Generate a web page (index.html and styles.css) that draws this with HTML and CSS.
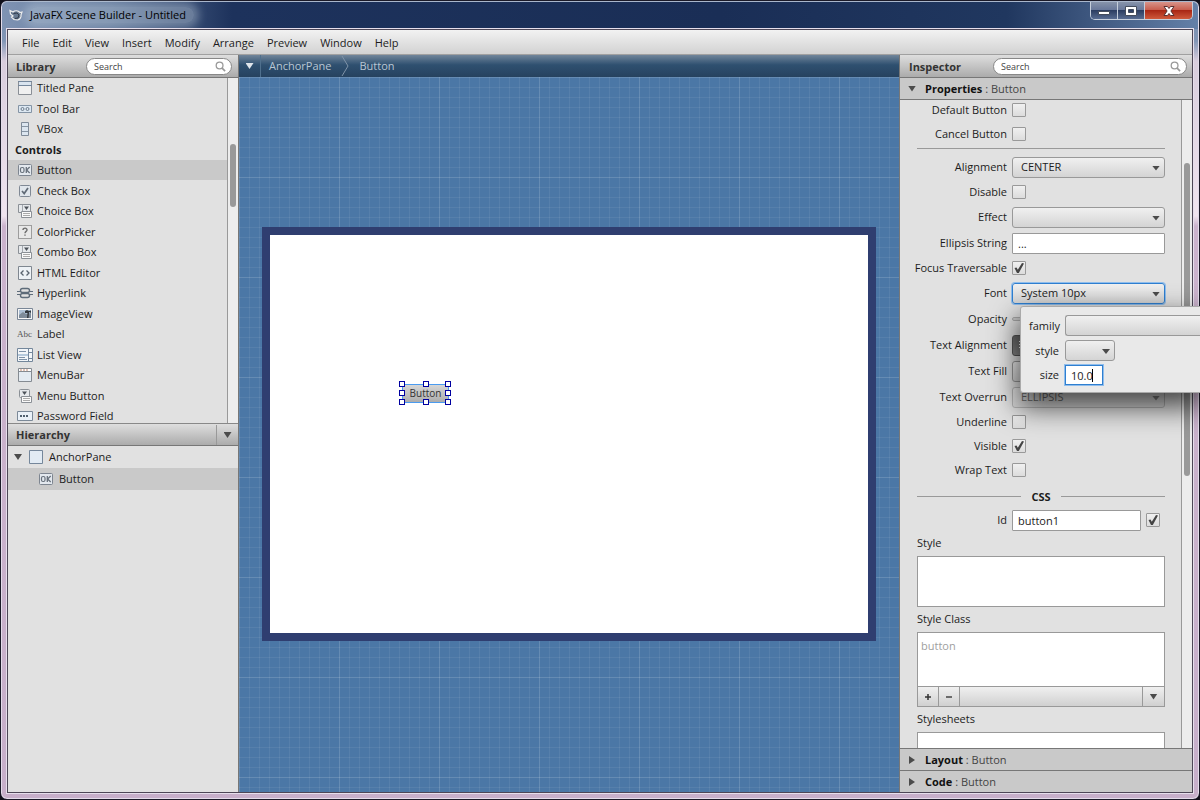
FILE: index.html
```html
<!DOCTYPE html>
<html lang="en">
<head>
  <meta charset="UTF-8" />
  <meta name="viewport" content="width=device-width, initial-scale=1.0"/>
  <title>JavaFX Scene Builder - Untitled</title>
  <link rel="stylesheet" href="styles.css">
</head>
<body>

<svg class="symbols" aria-hidden="true">
  <symbol id="i-titled" viewBox="0 0 16 16"><path d="M1.5 1.5h13v13h-13z" fill="#f0f0f0" stroke="#8a8f96"/><path d="M2 2h12v3H2z" fill="#d9e4ef"/><path d="M1 5.5h14M1 1.5h14" stroke="#74879c"/></symbol>
  <symbol id="i-toolbar" viewBox="0 0 16 16"><path d="M1.5 4.5h13v7h-13z" fill="#dde8f2" stroke="#8494a5"/><circle cx="5.5" cy="8" r="1.5" fill="none" stroke="#6c7a89"/><circle cx="10.5" cy="8" r="1.5" fill="none" stroke="#6c7a89"/></symbol>
  <symbol id="i-vbox" viewBox="0 0 16 16"><path d="M4.5 1.5h7v13h-7z" fill="#dce6f0" stroke="#7f8b99"/><path d="M5 5.500h6M5 10.500h6" stroke="#8795a4"/></symbol>
  <symbol id="i-button" viewBox="0 0 16 16"><rect x="1.500" y="2.500" width="13" height="11" rx="1" fill="#e3e8ee" stroke="#7d8590"/><rect x="3.500" y="5.500" width="3.500" height="5" rx="1.500" fill="none" stroke="#68717c" stroke-width="1.200"/><path d="M9.300 5v6M12.700 5L9.600 8l3.100 3" fill="none" stroke="#68717c" stroke-width="1.300"/></symbol>
  <symbol id="i-check" viewBox="0 0 16 16"><rect x="2.500" y="2.500" width="11" height="11" rx="1" fill="#e0e6ec" stroke="#808995"/><path d="M5 8l2.200 2.500L11 5" fill="none" stroke="#606a76" stroke-width="1.700"/></symbol>
  <symbol id="i-choice" viewBox="0 0 16 16"><path d="M1.500 1.500h12v8h-12z" fill="#e6e9ec" stroke="#8b9096"/><path d="M5.500 2v7" stroke="#a3a8ae"/><path d="M7 3.500h5L9.500 7z" fill="#4c5259"/><path d="M4.500 8.500h10v6h-10z" fill="#fafafa" stroke="#8b9096"/><path d="M6 10.500h7M6 12.500h7" stroke="#aaa"/></symbol>
  <symbol id="i-picker" viewBox="0 0 16 16"><path d="M1.500 1.500h13v13h-13z" fill="#e8e8e8" stroke="#555" stroke-dasharray="1 1"/><path d="M6 6c0-2.600 4.200-2.300 4 0-.1 1.400-2 1.400-2 3.200M8 10.500v1.300" fill="none" stroke="#6d6d6d" stroke-width="1.400"/></symbol>
  <symbol id="i-html" viewBox="0 0 16 16"><path d="M1.500 1.500h13v13h-13z" fill="#eef2f6" stroke="#7f8790"/><path d="M6.500 5.500L4 8l2.500 2.500M9.500 5.500L12 8l-2.500 2.500" fill="none" stroke="#59636e" stroke-width="1.300"/></symbol>
  <symbol id="i-link" viewBox="0 0 16 16"><rect x="3.500" y="3.500" width="9" height="4" rx="2" fill="none" stroke="#5d6b79" stroke-width="1.400"/><rect x="3.500" y="8.500" width="9" height="4" rx="2" fill="none" stroke="#5d6b79" stroke-width="1.400"/><path d="M0 6.500h4M12 6.500h4M0 9.500h4M12 9.500h4M5 8h6" stroke="#5d6b79" stroke-width="1.200"/></symbol>
  <symbol id="i-image" viewBox="0 0 16 16"><path d="M.5 2.500h15v11H.5z" fill="#f6f6f6" stroke="#7a8797"/><path d="M2 4h12v6H2z" fill="#adc0d5"/><path d="M2 9l4-3 3 2 5-1v5H2z" fill="#7e8b99"/><path d="M8 5l2-1 2 1 2-.5V7l-2-1v1l-.5 5H10l.5-5L8 7z" fill="#33383e"/></symbol>
  <symbol id="i-list" viewBox="0 0 16 16"><path d="M.5 1.500h15v13H.5z" fill="#f3f6f9" stroke="#74879b"/><path d="M11.500 2v12M12 5.500h3M12 11.500h3" stroke="#74879b"/><path d="M2 4.500h7M2 7.500h8M2 10.500h6M2 12.500h8" stroke="#7f93a8"/><path d="M1 7h10v2H1z" fill="#b6cadd"/></symbol>
  <symbol id="i-menubar" viewBox="0 0 16 16"><path d="M1.500 1.500h13v13h-13z" fill="#e4ebf2" stroke="#858b92"/><path d="M2 2h12v2.500H2z" fill="#fff"/><path d="M2 4.500h12" stroke="#858b92"/><path d="M3 3h2M6 3h2M9 3h2" stroke="#c08a72"/></symbol>
  <symbol id="i-menubtn" viewBox="0 0 16 16"><rect x="2.500" y="1.500" width="10" height="8" rx="1" fill="#e6e9ec" stroke="#8b9096"/><path d="M5 3.500h5L7.500 7z" fill="#4c5259"/><path d="M4.500 8.500h10v6h-10z" fill="#fafafa" stroke="#8b9096"/><path d="M6 10.500h7M6 12.500h7" stroke="#aaa"/></symbol>
  <symbol id="i-pass" viewBox="0 0 16 16"><path d="M.5 3.500h15v9H.5z" fill="#eaf1f8" stroke="#7b8998"/><path d="M3 7h2v2H3zM6 7h2v2H6zM9 7h2v2H9z" fill="#50606f"/></symbol>
  <symbol id="i-anchor" viewBox="0 0 16 16"><path d="M1.500 1.500h13v13h-13z" fill="#e2ebf4" stroke="#75879b"/></symbol>
  <symbol id="i-search" viewBox="0 0 12 12"><circle cx="5" cy="5" r="3.700" fill="none" stroke="#999" stroke-width="1.400"/><path d="M7.500 7.500L11 11" stroke="#999" stroke-width="1.800"/></symbol>
</svg>

<div class="window">
  <header class="titlebar">
    <svg class="app-icon" viewBox="0 0 14 14"><path d="M1 2.500l3 1.500c2-1.800 5-1.700 7 .5l2-.5-1 3c.5 2-1 4.500-3.500 5L5 11.500 2.500 9 4 8 1.500 6z" fill="#66788f" stroke="#eee" stroke-width="1.200"/><path d="M4.500 5.500L8 5l2 2-1 3-3 .5" fill="none" stroke="#303a4a"/></svg>
    <h1>JavaFX Scene Builder - Untitled</h1>
    <div class="window-buttons">
      <button aria-label="Minimize"><svg viewBox="0 0 14 12"><path d="M1.500 6.500h11v3h-11z" fill="#fff" stroke="#444c5c"/></svg></button>
      <button aria-label="Maximize"><svg viewBox="0 0 14 12"><path d="M1.500 1.500h11v9h-11zM4.500 4.500v3h5v-3z" fill="#fff" fill-rule="evenodd" stroke="#444c5c"/></svg></button>
      <button class="close" aria-label="Close"><svg viewBox="0 0 14 12"><path d="M2 1.500h3.500L7 3.500l1.500-2H12L8.900 6l3.100 4.500H8.500L7 8.500l-1.500 2H2L5.100 6z" fill="#fff" stroke="#5a3030"/></svg></button>
    </div>
  </header>

  <div class="app">
    <nav class="menubar">
      <button>File</button>
      <button>Edit</button>
      <button>View</button>
      <button>Insert</button>
      <button>Modify</button>
      <button>Arrange</button>
      <button>Preview</button>
      <button>Window</button>
      <button>Help</button>
    </nav>

    <div class="workspace">
      <aside class="left">
        <div class="panel-head">
          <h2>Library</h2>
          <label class="search"><input type="text" placeholder="Search" aria-label="Search library"><svg><use href="#i-search"/></svg></label>
        </div>
        <div class="library">
          <ul class="items">
            <li><svg><use href="#i-titled"/></svg>Titled Pane</li>
            <li><svg><use href="#i-toolbar"/></svg>Tool Bar</li>
            <li><svg><use href="#i-vbox"/></svg>VBox</li>
            <li class="group">Controls</li>
            <li class="selected"><svg><use href="#i-button"/></svg>Button</li>
            <li><svg><use href="#i-check"/></svg>Check Box</li>
            <li><svg><use href="#i-choice"/></svg>Choice Box</li>
            <li><svg><use href="#i-picker"/></svg>ColorPicker</li>
            <li><svg><use href="#i-choice"/></svg>Combo Box</li>
            <li><svg><use href="#i-html"/></svg>HTML Editor</li>
            <li><svg><use href="#i-link"/></svg>Hyperlink</li>
            <li><svg><use href="#i-image"/></svg>ImageView</li>
            <li><span class="abc">Abc</span>Label</li>
            <li><svg><use href="#i-list"/></svg>List View</li>
            <li><svg><use href="#i-menubar"/></svg>MenuBar</li>
            <li><svg><use href="#i-menubtn"/></svg>Menu Button</li>
            <li><svg><use href="#i-pass"/></svg>Password Field</li>
          </ul>
          <div class="track"><div class="thumb"></div></div>
        </div>
        <div class="panel-head hierarchy-head">
          <h2>Hierarchy</h2>
          <button class="head-menu" aria-label="Hierarchy options"><i class="arrow"></i></button>
        </div>
        <ul class="tree">
          <li><i class="arrow"></i><svg><use href="#i-anchor"/></svg>AnchorPane</li>
          <li class="child selected"><svg><use href="#i-button"/></svg>Button</li>
        </ul>
      </aside>

      <main class="content">
        <nav class="crumbs">
          <button class="crumb-menu" aria-label="Document menu"><i class="arrow"></i></button>
          <button>AnchorPane</button>
          <svg viewBox="0 0 8 20"><path d="M1 0l6 10-6 10" fill="none" stroke="#7f93a8"/></svg>
          <button>Button</button>
        </nav>
        <div class="canvas">
          <div class="artboard">
            <div class="selection">
              <button>Button</button>
              <i class="n w"></i><i class="n"></i><i class="n e"></i>
              <i class="w"></i><i class="e"></i>
              <i class="s w"></i><i class="s"></i><i class="s e"></i>
            </div>
          </div>
        </div>
      </main>

      <aside class="right">
        <div class="panel-head">
          <h2>Inspector</h2>
          <label class="search"><input type="text" placeholder="Search" aria-label="Search properties"><svg><use href="#i-search"/></svg></label>
        </div>
        <button class="section open"><i class="arrow"></i><b>Properties</b> : Button</button>
        <div class="inspector">
          <form class="props">
            <div class="row check"><label for="default">Default Button</label><input type="checkbox" id="default"></div>
            <div class="row check"><label for="cancel">Cancel Button</label><input type="checkbox" id="cancel"></div>
            <hr>
            <div class="row"><label for="alignment">Alignment</label><span class="combo"><select id="alignment"><option>CENTER</option></select></span></div>
            <div class="row check"><label for="disable">Disable</label><input type="checkbox" id="disable"></div>
            <div class="row"><label for="effect">Effect</label><span class="combo"><select id="effect"><option></option></select></span></div>
            <div class="row"><label for="ellipsis">Ellipsis String</label><input type="text" id="ellipsis" value="..."></div>
            <div class="row check"><label for="focus">Focus Traversable</label><input type="checkbox" id="focus" checked></div>
            <div class="row"><label for="font">Font</label><span class="combo focused"><select id="font"><option>System 10px</option></select></span></div>
            <div class="row"><label for="opacity">Opacity</label><input type="range" id="opacity" value="100"></div>
            <div class="row"><label for="align">Text Alignment</label><button type="button" id="align" class="toggle"><svg viewBox="0 0 10 10"><path d="M0 1.500h9M0 4.500h6M0 7.500h9" stroke="#fff"/></svg></button></div>
            <div class="row"><label for="fill">Text Fill</label><span class="combo"><select id="fill"><option></option></select></span></div>
            <div class="row"><label for="overrun">Text Overrun</label><span class="combo dim"><select id="overrun"><option>ELLIPSIS</option></select></span></div>
            <div class="row check"><label for="underline">Underline</label><input type="checkbox" id="underline"></div>
            <div class="row check"><label for="visible">Visible</label><input type="checkbox" id="visible" checked></div>
            <div class="row check"><label for="wrap">Wrap Text</label><input type="checkbox" id="wrap"></div>
            <h3>CSS</h3>
            <div class="row"><label for="id">Id</label><input type="text" id="id" value="button1"><input type="checkbox" aria-label="Use id" checked></div>
            <label class="block" for="style">Style</label>
            <textarea id="style"></textarea>
            <label class="block" for="style-class">Style Class</label>
            <div class="list-box">
              <textarea id="style-class" placeholder="button"></textarea>
              <div class="list-tools">
                <button type="button" aria-label="Add"><svg viewBox="0 0 8 8"><path d="M1 4h6M4 1v6" stroke="#333" stroke-width="1.500"/></svg></button>
                <button type="button" aria-label="Remove"><svg viewBox="0 0 8 8"><path d="M1 4h6" stroke="#444" stroke-width="1.500"/></svg></button>
                <button type="button" class="more" aria-label="More"><i class="arrow"></i></button>
              </div>
            </div>
            <label class="block" for="sheets">Stylesheets</label>
            <textarea id="sheets"></textarea>
          </form>
          <div class="track"><div class="thumb"></div></div>
        </div>
        <button class="section"><i class="arrow"></i><b>Layout</b> : Button</button>
        <button class="section"><i class="arrow"></i><b>Code</b> : Button</button>
      </aside>
    </div>
  </div>

  <!-- font editor, opened under the Font combo -->
  <div class="popup">
    <label for="family">family</label><span class="combo wide"><select id="family"><option></option></select></span>
    <label for="fstyle">style</label><span class="combo small"><select id="fstyle"><option></option></select></span>
    <label for="size">size</label><span class="size-box"><input type="text" id="size" value="10.0"><i class="caret"></i></span>
  </div>
</div>

</body>
</html>
```

FILE: styles.css
```css
:root {
  --panel: #e1e1e1;
  --line: #777;
  --text: #1c1c1c;
  --selected: #c9c9c9;
}

* {
  box-sizing: border-box;
}

body {
  margin: 0;
  height: 100vh;
  overflow: hidden;
  background-color: #10101a;
  color: var(--text);
  font-family: "Open Sans", sans-serif;
  font-size: 11px;
  line-height: 16px;
}

button, input, select, textarea {
  font: inherit;
  color: inherit;
}

button {
  padding: 0;
  border: 0;
  background: none;
}

h1, h2, h3, ul {
  margin: 0;
  padding: 0;
  font-size: 11px;
}

ul {
  list-style: none;
}

.symbols {
  position: absolute;
  width: 0;
  height: 0;
}

.arrow {
  flex: none;
  width: 8px;
  height: 6px;
  background-color: #4b4b4b;
  clip-path: polygon(0 0, 100% 0, 50% 100%);
}

/* window frame */
.window {
  position: relative;
  display: flex;
  flex-direction: column;
  height: 100vh;
  padding: 0 6px 6px;
  border: 1px solid #1b1a28;
  border-radius: 7px;
  background: linear-gradient(to bottom, #7288ab 0, #8296b6 40px, #d8cddd 60px, #f0e4ef 215px, #cbb3cd 225px, #c7afca 100%);
  box-shadow: inset 0 0 0 1px #e3dcea;
}

.titlebar {
  display: flex;
  align-items: center;
  gap: 6px;
  height: 28px;
  flex: none;
  margin: 0 -5px;
  padding: 0 0 2px 7px;
  border-top: 1px solid #a9b6cb;
  border-radius: 6px 6px 0 0;
  background: linear-gradient(to right, #7f93b3 0, #5f7699 110px, #1d325c 230px, #1a2e56 60%, #20375f 84%, #6480a8 100%);
}

.titlebar h1 {
  padding: 0 8px 0 1px;
  font-weight: normal;
  color: #000;
  background-color: rgba(190, 205, 220, 0.4);
  border-radius: 8px;
  box-shadow: 0 0 8px 5px rgba(190, 205, 220, 0.4);
}

.app-icon {
  width: 14px;
  height: 14px;
}

.window-buttons {
  display: flex;
  align-self: flex-start;
  margin-left: auto;
  margin-right: 5px;
  border: 1px solid #c5cedb;
  border-top: 0;
  border-radius: 0 0 5px 5px;
  overflow: hidden;
}

.window-buttons button {
  display: grid;
  place-items: center;
  width: 27px;
  height: 17px;
  border-right: 1px solid #c5cedb;
  background: linear-gradient(#8793aa 0, #69789a 45%, #2c3e62 50%, #576b90 100%);
}

.window-buttons .close {
  width: 47px;
  border-right: 0;
  background: linear-gradient(#d8948a 0, #c85f50 45%, #a92715 50%, #cf5a3c 100%);
}

.window-buttons svg {
  width: 14px;
  height: 12px;
}

.app {
  display: flex;
  flex-direction: column;
  flex: 1;
  min-height: 0;
  border: 1px solid #4d4656;
  box-shadow: 0 0 0 1px #e6dfec;
}

.menubar {
  display: flex;
  flex: none;
  gap: 13px;
  height: 25px;
  padding: 2px 0 0 14px;
  border-bottom: 1px solid #a0a0a0;
  background: linear-gradient(#f2f2f2, #d2d2d2);
}

.workspace {
  display: flex;
  flex: 1;
  min-height: 0;
}

.left, .right {
  display: flex;
  flex-direction: column;
  flex: none;
  background-color: var(--panel);
}

.left {
  width: 231px;
  border-right: 1px solid var(--line);
}

.right {
  width: 293px;
  border-left: 1px solid var(--line);
}

.panel-head {
  display: flex;
  align-items: center;
  justify-content: space-between;
  flex: none;
  height: 23px;
  padding: 1px 6px 0 8px;
  border-bottom: 1px solid var(--line);
  background: linear-gradient(#dedede, #ababab);
}

.panel-head h2 {
  color: #333;
}

.right .panel-head {
  padding-left: 9px;
  padding-right: 5px;
}

.search {
  display: flex;
  align-items: center;
  width: 146px;
  height: 17px;
  padding: 0 5px 0 7px;
  border: 1px solid #888;
  border-radius: 9px;
  background-color: #fff;
}

.right .search {
  width: 194px;
}

.search input {
  flex: 1;
  min-width: 0;
  padding: 0;
  border: 0;
  outline: 0;
  background: none;
  font-size: 9px;
}

.search input::placeholder {
  color: #444;
}

.search svg {
  width: 11px;
  height: 11px;
}

/* library */
.library {
  display: flex;
  flex: none;
  height: 345px;
  overflow: hidden;
}

.items {
  flex: 1;
}

.items li {
  display: flex;
  align-items: center;
  gap: 4px;
  height: 20px;
  padding-left: 9px;
}

.items li:nth-child(even) {
  height: 21px;
}

.items .group {
  padding-left: 7px;
  font-weight: bold;
}

.items svg, .tree svg {
  width: 16px;
  height: 16px;
}

.abc {
  width: 16px;
  font-family: "Liberation Serif", serif;
  font-size: 9px;
  color: #555;
}

.selected {
  background-color: var(--selected);
}

.track {
  flex: none;
  width: 11px;
  padding: 66px 2px 0;
  border-left: 1px solid #999;
  background-color: #ededed;
}

.thumb {
  height: 63px;
  border-radius: 3px;
  background-color: #999;
}

.hierarchy-head {
  padding-right: 0;
  border-top: 1px solid #888;
}

.head-menu {
  display: grid;
  place-items: center;
  width: 22px;
  height: 20px;
  border-left: 1px solid #999;
}

.tree li {
  display: flex;
  align-items: center;
  gap: 5px;
  height: 22px;
  padding-left: 6px;
}

.tree li svg {
  margin-left: 1px;
}

.tree .child {
  padding-left: 29px;
}

/* content */
.content {
  display: flex;
  flex-direction: column;
  flex: 1;
  min-width: 0;
}

.crumbs {
  display: flex;
  flex: none;
  gap: 8px;
  height: 22px;
  color: #b9c6d3;
  background: linear-gradient(#70859a, #2f5070 45%, #26425f);
}

.crumbs svg {
  width: 8px;
  height: 22px;
  margin: 0 2px;
}

.crumb-menu {
  display: grid;
  place-items: center;
  width: 22px;
  border-right: 1px solid #50708d;
}

.crumb-menu .arrow {
  background-color: #e0e6ec;
}

.canvas {
  display: grid;
  place-items: center;
  flex: 1;
  min-height: 0;
  padding-bottom: 2px;
  background-color: #4b77a6;
  background-image:
    linear-gradient(to right, rgba(255, 255, 255, 0.09) 1px, transparent 1px),
    linear-gradient(to bottom, rgba(255, 255, 255, 0.09) 1px, transparent 1px),
    linear-gradient(to right, rgba(255, 255, 255, 0.06) 1px, transparent 1px),
    linear-gradient(to bottom, rgba(255, 255, 255, 0.06) 1px, transparent 1px);
  background-size: 100px 100px, 100px 100px, 10px 10px, 10px 10px;
}

.artboard {
  position: relative;
  width: 614px;
  height: 414px;
  border: 8px solid #2f3e70;
  background-color: #fff;
}

.selection {
  position: absolute;
  left: 132px;
  top: 149px;
  width: 47px;
  height: 19px;
  border: 1px solid #4a9bf0;
}

.selection button {
  display: block;
  width: 100%;
  height: 100%;
  font-size: 10px;
  line-height: 17px;
  color: #333;
  background: linear-gradient(#d6d6d6, #adadad);
}

.selection i {
  position: absolute;
  left: calc(50% - 3px);
  top: calc(50% - 3px);
  width: 6px;
  height: 6px;
  border: 1px solid #0000a0;
  background-color: #fff;
}

.selection .n { top: -4px; }
.selection .s { top: calc(100% - 3px); }
.selection .w { left: -4px; }
.selection .e { left: calc(100% - 3px); }

/* inspector */
.section {
  display: flex;
  align-items: center;
  flex: none;
  height: 22px;
  padding-left: 8px;
  border-top: 1px solid var(--line);
  background-color: var(--selected);
  color: #444;
  white-space: pre;
}

.section b {
  color: #111;
}

.section .arrow {
  margin-right: 9px;
  transform: rotate(-90deg);
}

.section.open {
  border-top: 0;
  border-bottom: 1px solid var(--line);
}

.section.open .arrow {
  transform: none;
}

.inspector {
  display: flex;
  flex: 1;
  min-height: 0;
  overflow: hidden;
}

.props {
  display: flex;
  flex-direction: column;
  gap: 4px;
  flex: 1;
  min-width: 0;
  padding: 0 16px 0 17px;
}

.right .track {
  padding-top: 63px;
}

.right .thumb {
  height: 313px;
}

.row {
  display: flex;
  align-items: center;
  gap: 5px;
  flex: none;
  height: 22px;
}

.row.check {
  height: 20px;
}

/* long captions grow to the left, into the panel padding */
.row label {
  display: flex;
  justify-content: flex-end;
  flex: none;
  width: 90px;
  white-space: nowrap;
}

.props hr {
  flex: none;
  width: 100%;
  height: 4px;
  margin: 0;
  border: 0;
  border-top: 1px solid #999;
}

.props h3 {
  display: flex;
  align-items: center;
  gap: 10px;
  flex: none;
  height: 17px;
  margin-top: 4px;
}

.props h3::before, .props h3::after {
  content: "";
  flex: 1;
  height: 1px;
  background-color: #999;
}

input[type="checkbox"] {
  appearance: none;
  flex: none;
  width: 14px;
  height: 14px;
  margin: 0;
  border: 1px solid #999;
  border-radius: 1px;
  background: linear-gradient(#f0f0f0, #dcdcdc);
}

input[type="checkbox"]:checked::after {
  content: "";
  display: block;
  width: 10px;
  height: 10px;
  margin: 1px;
  background-color: #444;
  clip-path: polygon(5% 50%, 25% 45%, 38% 68%, 80% 0, 100% 5%, 48% 100%, 30% 100%);
}

.row input[type="text"] {
  flex: 1;
  min-width: 0;
  height: 21px;
  padding: 0 5px;
  border: 1px solid #999;
  border-radius: 1px;
  background-color: #fff;
}

#id + input {
  margin-right: 5px;
}

.combo {
  position: relative;
  flex: 1;
  height: 21px;
}

.combo select {
  appearance: none;
  display: block;
  width: 100%;
  height: 21px;
  padding: 0 8px;
  border: 1px solid #999;
  border-radius: 3px;
  background: linear-gradient(#f0f0f0, #d4d4d4);
}

.combo::after {
  content: "";
  position: absolute;
  right: 5px;
  top: 9px;
  width: 8px;
  height: 5px;
  background-color: #4b4b4b;
  clip-path: polygon(0 0, 100% 0, 50% 100%);
  pointer-events: none;
}

.combo.focused select {
  border-color: #2f7fd0;
  box-shadow: 0 0 0 1px #8fbdec;
}

.combo.dim {
  opacity: 0.6;
}

#opacity {
  appearance: none;
  flex: 1;
  min-width: 0;
  height: 4px;
  margin: 0;
  border: 1px solid #aaa;
  border-radius: 2px;
  background-color: #ccc;
}

.toggle {
  display: grid;
  place-items: center;
  width: 24px;
  height: 21px;
  border: 1px solid #555;
  border-radius: 3px;
  background: linear-gradient(#666, #888);
}

.toggle svg {
  width: 10px;
  height: 10px;
}

.block {
  flex: none;
  height: 17px;
}

textarea {
  display: block;
  flex: none;
  width: 100%;
  height: 51px;
  padding: 5px 3px;
  border: 1px solid #999;
  outline: 0;
  resize: none;
  background-color: #fff;
}

textarea::placeholder {
  color: #a0a0a0;
}

.list-box {
  flex: none;
  border: 1px solid #999;
}

.list-box textarea {
  height: 53px;
  border: 0;
}

.list-tools {
  display: flex;
  height: 20px;
  border-top: 1px solid #999;
  background: linear-gradient(#f0f0f0, #d0d0d0);
}

.list-tools button {
  display: grid;
  place-items: center;
  width: 21px;
  border-right: 1px solid #999;
}

.list-tools svg {
  width: 8px;
  height: 8px;
}

.list-tools .more {
  width: 22px;
  margin-left: auto;
  border-left: 1px solid #999;
  border-right: 0;
}

/* font popup */
.popup {
  position: absolute;
  top: 305px;
  right: -2px;
  display: grid;
  grid-template-columns: 30px 1fr;
  align-items: center;
  gap: 4px 6px;
  width: 181px;
  padding: 8px 0 7px 8px;
  border: 1px solid #aaa;
  border-radius: 3px 0 0 3px;
  background-color: #e9e9e9;
  box-shadow: 0 12px 28px 2px rgba(0, 0, 0, 0.7);
}

.popup label {
  text-align: right;
}

.combo.wide::after {
  content: none;
}

.combo.wide select {
  border-right: 0;
  border-radius: 3px 0 0 3px;
}

.combo.small {
  width: 50px;
}

.size-box {
  position: relative;
  width: 38px;
  height: 20px;
}

.size-box input {
  display: block;
  width: 38px;
  height: 20px;
  padding: 0 5px;
  border: 1px solid #2f7fd0;
  box-shadow: 0 0 0 1px #8fbdec;
  background-color: #fff;
}

.caret {
  position: absolute;
  left: 27px;
  top: 4px;
  width: 1px;
  height: 13px;
  background-color: #000;
}
```
